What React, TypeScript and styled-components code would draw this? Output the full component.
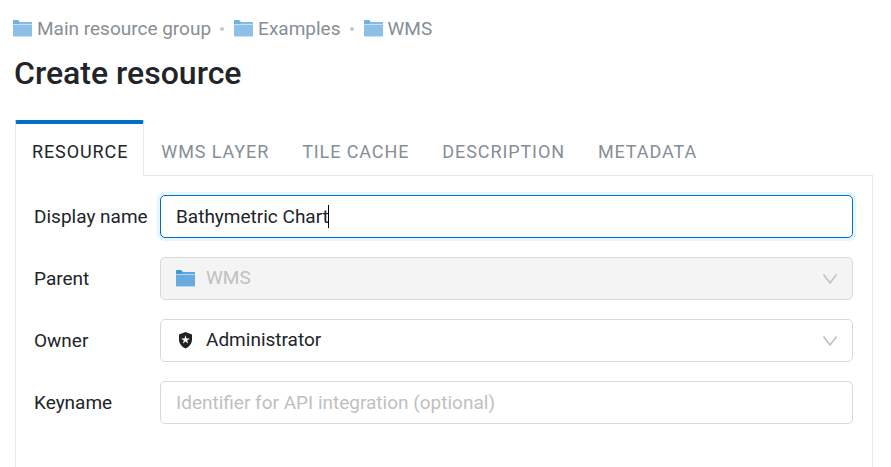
import React, { useLayoutEffect, useRef, useState } from "react";
import styled, { createGlobalStyle, css } from "styled-components";

const GlobalStyle = createGlobalStyle`
  *, *::before, *::after { box-sizing: border-box; }
  html, body { margin: 0; background: #fff; }
  html, body, #root { min-height: 100vh; }
  #root { display: flex; flex-direction: column; }
  body, button, input, select {
    font-family: Roboto, "Liberation Sans", sans-serif;
    font-size: 19px;
    color: #212529;
  }
`;

const Page = styled.main`
  flex: 1;
  display: flex;
  flex-direction: column;
  padding: 16px 18px 0 15px;
`;

const Breadcrumbs = styled.nav`
  display: flex;
  align-items: center;
  height: 25px;
  margin-left: -2px;
`;

const Crumb = styled.a`
  display: flex;
  align-items: center;
  gap: 5px;
  color: #868e96;
  line-height: 24px;
  text-decoration: none;
  svg { opacity: 0.75; }
`;

const Dot = styled.span`
  width: 4px;
  height: 4px;
  margin: 0 10px 0 9px;
  border-radius: 50%;
  background: #c3c8cc;
`;

const Title = styled.h1`
  margin: 12px 0 27px -1px;
  font-size: 32px;
  font-weight: 500;
  line-height: 40px;
`;

const TabList = styled.div`
  display: flex;
  border-bottom: 1px solid #e8e8e8;
`;

const Tab = styled.button<{ $active: boolean }>`
  height: 56px;
  margin: 0 0 -1px;
  padding: 8px 16px 0 17px;
  border: 0;
  background: #fff;
  font-size: 18px;
  letter-spacing: 0.05em;
  text-transform: uppercase;
  white-space: nowrap;
  color: #868e96;
  ${(p) =>
    p.$active
      ? css`
          padding: 3px 15px 0 16px;
          border: 1px solid #e8e8e8;
          border-width: 0 1px;
          border-top: 4px solid #0070c5;
          border-radius: 2px 2px 0 0;
          color: #212529;
        `
      : css`
          height: 55px;
          margin-bottom: 0;
        `}
`;

const Panel = styled.form`
  flex: 1;
  display: flex;
  flex-direction: column;
  gap: 19px;
  padding: 19px 19px 19px 18px;
  border: 1px solid #e8e8e8;
  border-width: 0 1px;
`;

const Row = styled.div`
  display: grid;
  grid-template-columns: 126px 1fr;
  align-items: center;
`;

const Label = styled.label`
  white-space: nowrap;
`;

const control = css`
  width: 100%;
  height: 43px;
  padding: 0 15px;
  border: 1px solid #d9d9d9;
  border-radius: 5px;
  background: #fff;
  outline: none;
`;

const TextInput = styled.input`
  ${control}
  &::placeholder { color: #bfbfbf; opacity: 1; }
  &:focus {
    border-color: #0070c5;
    box-shadow: 0 0 0 3px #e6f6ff;
  }
`;

const CaretBox = styled.div`
  position: relative;
  input { caret-color: transparent; }
`;

const Caret = styled.span`
  position: absolute;
  top: 10px;
  width: 1px;
  height: 23px;
  background: #000;
  pointer-events: none;
`;

const SelectBox = styled.div`
  display: grid;
  grid-template-columns: 20px 1fr 16px;
  align-items: center;
  column-gap: 10px;
  > * { grid-row: 1; }
  > svg { z-index: 1; pointer-events: none; }
  > svg:first-child { grid-column: 1; margin-left: 16px; }
  > svg:last-child { grid-column: 3; margin-left: -15px; }
`;

const Select = styled.select`
  ${control}
  grid-column: 1 / -1;
  padding: 0 40px 2px 45px;
  appearance: none;
  &:disabled {
    background: #f4f4f4;
    color: #bfbfbf;
    opacity: 1;
  }
`;

const FolderIcon = () => (
  <svg width="19" height="17" viewBox="0 0 19 17" aria-hidden="true">
    <path d="M0 1q0-1 1-1h4l2 2v2H0z" fill="#3d9ad8" />
    <path d="M6 2h13v2H6z" fill="#5aa8dd" />
    <path d="M0 4h19v1H0z" fill="#b4d7f1" />
    <path d="M0 5h19v11H0z" fill="#69abe0" />
    <path d="M0 16h19v1H0z" fill="#b9daf3" />
  </svg>
);

const ShieldIcon = () => (
  <svg width="19" height="19" viewBox="0 0 19 19" aria-hidden="true">
    <path d="M9.5 1 16 3.500v5c0 4-2.700 7.300-6.500 8.900C5.700 15.800 3 12.500 3 8.500v-5z" fill="#212121" />
    <path d="m9.500 4.200 1 3.300 3.300.1-2.600 1.800.9 3.100-2.600-1.900-2.600 1.900.9-3.100-2.600-1.800 3.300-.1z" fill="#fff" />
  </svg>
);

const ChevronIcon = () => (
  <svg width="16" height="12" viewBox="0 0 16 12" fill="none" aria-hidden="true">
    <path d="m1.500 1.500 6.500 8.500 6.500-8.500" stroke="#bfbfbf" strokeWidth="1.500" />
  </svg>
);

type CaretInputProps = { id: string; value: string; onChange: (value: string) => void };

function CaretInput({ id, value, onChange }: CaretInputProps) {
  const ref = useRef<HTMLInputElement>(null);
  const [focused, setFocused] = useState(true);
  const [position, setPosition] = useState(value.length);
  const [left, setLeft] = useState(16);

  useLayoutEffect(() => {
    const context = document.createElement("canvas").getContext("2d");
    if (!context || !ref.current) return;
    const style = getComputedStyle(ref.current);
    context.font = `${style.fontSize} ${style.fontFamily}`;
    const width = context.measureText(value.slice(0, position)).width;
    setLeft(Math.floor(16 + width) - ref.current.scrollLeft);
  }, [value, position]);

  return (
    <CaretBox>
      <TextInput
        id={id}
        ref={ref}
        autoFocus
        value={value}
        onFocus={() => setFocused(true)}
        onBlur={() => setFocused(false)}
        onSelect={(e) => {
          if (focused && document.activeElement === e.currentTarget && e.nativeEvent.type !== "focusin") {
            setPosition(e.currentTarget.selectionEnd ?? value.length);
          }
        }}
        onChange={(e) => {
          setPosition(e.target.selectionEnd ?? e.target.value.length);
          onChange(e.target.value);
        }}
      />
      {focused && <Caret style={{ left }} />}
    </CaretBox>
  );
}

const crumbs = ["Main resource group", "Examples", "WMS"];
const tabs = ["Resource", "WMS layer", "Tile cache", "Description", "Metadata"];

export default function App() {
  const [active, setActive] = useState(0);
  const [name, setName] = useState("Bathymetric Chart");
  return (
    <>
      <GlobalStyle />
      <Page>
        <Breadcrumbs aria-label="Breadcrumb">
          {crumbs.map((c, i) => (
            <React.Fragment key={c}>
              {i > 0 && <Dot />}
              <Crumb href="#">
                <FolderIcon />
                {c}
              </Crumb>
            </React.Fragment>
          ))}
        </Breadcrumbs>
        <Title>Create resource</Title>
        <TabList role="tablist">
          {tabs.map((t, i) => (
            <Tab key={t} type="button" role="tab" aria-selected={i === active} $active={i === active} onClick={() => setActive(i)}>
              {t}
            </Tab>
          ))}
        </TabList>
        <Panel>
          <Row>
            <Label htmlFor="name">Display name</Label>
            <CaretInput id="name" value={name} onChange={setName} />
          </Row>
          <Row>
            <Label htmlFor="parent">Parent</Label>
            <SelectBox>
              <FolderIcon />
              <Select id="parent" disabled>
                <option>WMS</option>
              </Select>
              <ChevronIcon />
            </SelectBox>
          </Row>
          <Row>
            <Label htmlFor="owner">Owner</Label>
            <SelectBox>
              <ShieldIcon />
              <Select id="owner">
                <option>Administrator</option>
              </Select>
              <ChevronIcon />
            </SelectBox>
          </Row>
          <Row>
            <Label htmlFor="keyname">Keyname</Label>
            <TextInput id="keyname" placeholder="Identifier for API integration (optional)" />
          </Row>
        </Panel>
      </Page>
    </>
  );
}
